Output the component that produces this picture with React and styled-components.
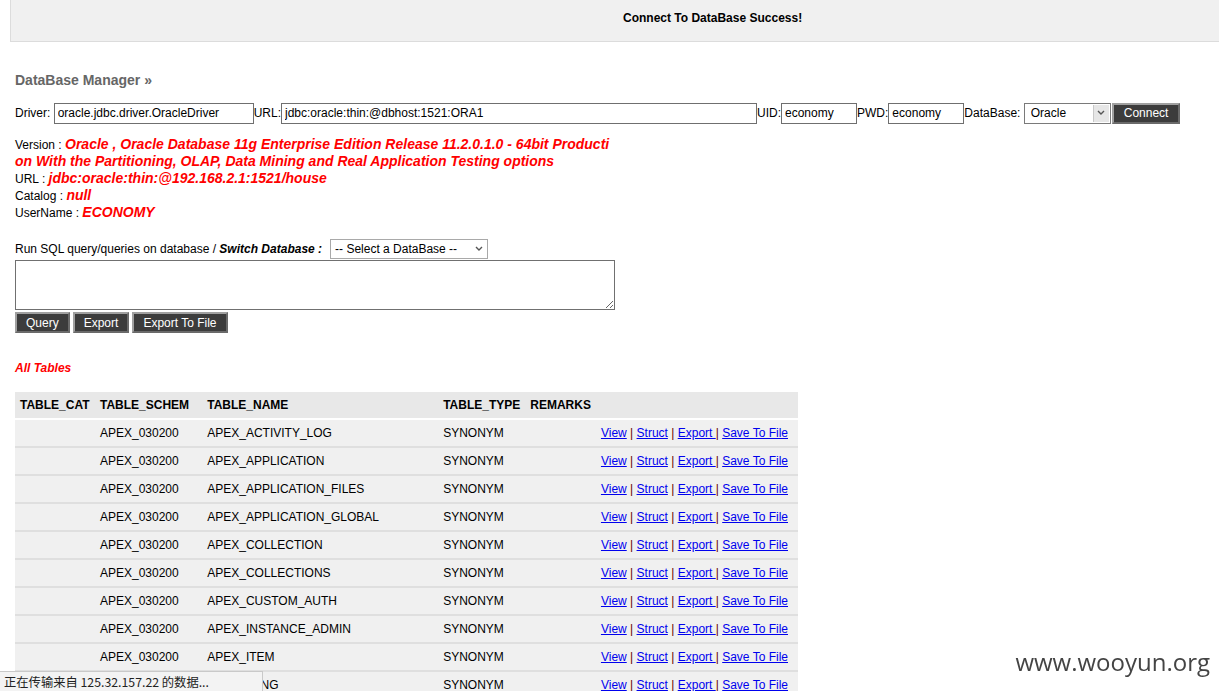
import React from 'react';
import styled, { createGlobalStyle } from 'styled-components';

const GlobalStyle = createGlobalStyle`
  body {
    margin: 0;
    background: #fff;
    font-family: "Liberation Sans", Arial, sans-serif;
    font-size: 12px;
    color: #000;
  }
`;

const TopBar = styled.div`
  margin-left: 10px;
  height: 42px;
  box-sizing: border-box;
  background: #f0f0f0;
  border-left: 1px solid #dcdcdc;
  border-bottom: 1px solid #dcdcdc;
  display: flex;
  align-items: center;
  padding-left: 612px;
  padding-bottom: 6px;
  font-weight: bold;
  font-size: 12px;
`;

const Content = styled.div`
  padding: 0 15px;
`;

const Title = styled.h3`
  margin: 30px 0 14px;
  font-size: 14px;
  font-weight: bold;
  color: #666;
`;

const FormRow = styled.div`
  display: flex;
  align-items: center;
  height: 22px;
`;

const Field = styled.input`
  box-sizing: border-box;
  height: 21px;
  width: ${({ w }) => w}px;
  border: 1px solid #6f6f6f;
  padding: 0 3px;
  font-family: "Liberation Sans", Arial, sans-serif;
  font-size: 12px;
  color: #000;
  outline: none;
`;

const SelectWrap = styled.div`
  position: relative;
  width: ${({ w }) => w}px;
  height: ${({ h }) => h}px;
`;

const Select = styled.select`
  appearance: none;
  box-sizing: border-box;
  width: 100%;
  height: 100%;
  border: 1px solid ${({ light }) => (light ? '#a9a9a9' : '#7a7a7a')};
  background: #fff;
  padding: 0 0 0 ${({ light }) => (light ? 4 : 6)}px;
  font-family: "Liberation Sans", Arial, sans-serif;
  font-size: 12px;
  color: #000;
  outline: none;
`;

const Arrow = styled.div`
  position: absolute;
  top: 2px;
  right: 2px;
  bottom: 2px;
  width: 15px;
  background: ${({ plain }) => (plain ? '#fff' : '#e6e6e6')};
  border-left: ${({ plain }) => (plain ? 'none' : '1px solid #c8c8c8')};
  display: flex;
  align-items: center;
  justify-content: center;
  pointer-events: none;
`;

const DarkButton = styled.button`
  height: 21px;
  padding: 0 ${({ pad }) => pad || 9}px;
  background: #3c3c3c;
  color: #fff;
  border: 2px solid;
  border-color: #a0a0a0 #6a6a6a #6a6a6a #a0a0a0;
  font-family: "Liberation Sans", Arial, sans-serif;
  font-size: 12px;
  margin-left: ${({ ml }) => ml || 0}px;
  cursor: pointer;
`;

const Info = styled.div`
  margin-top: 13px;
  line-height: 17px;
  width: 605px;
`;

const Red = styled.span`
  color: #f00;
  font-weight: bold;
  font-style: italic;
  line-height: 1;
  font-size: ${({ small }) => (small ? 12 : 14)}px;
`;

const QueryLine = styled.div`
  margin-top: 17px;
  display: flex;
  align-items: center;
  gap: 8px;
`;

const Textarea = styled.textarea`
  display: block;
  box-sizing: border-box;
  width: 600px;
  height: 50px;
  margin-top: 1px;
  border: 1px solid #707070;
  resize: both;
`;

const ButtonRow = styled.div`
  display: flex;
  gap: 3px;
  margin-top: 2px;
`;

const AllTables = styled.div`
  margin-top: 28px;
  margin-bottom: 17px;
`;

const Table = styled.table`
  width: 783px;
  border-collapse: collapse;
  font-size: 12px;
`;

const HeadCell = styled.th`
  background: #e8e8e8;
  height: 26px;
  text-align: left;
  padding: 0 5px;
  font-weight: bold;
  border-bottom: 2px solid #fff;
  white-space: nowrap;
`;

const Cell = styled.td`
  background: #f0f0f0;
  height: 26px;
  padding: 0 5px;
  border-bottom: 2px solid #dfdfdf;
  text-align: ${({ right }) => (right ? 'right' : 'left')};
  padding-right: ${({ right }) => (right ? 10 : 5)}px;
  white-space: nowrap;
`;

const Link = styled.a`
  color: #00e;
  text-decoration: underline;
`;

const Sep = styled.span`
  color: #600;
`;

const Status = styled.div`
  position: fixed;
  left: 0;
  bottom: 0;
  width: 263px;
  height: 20px;
  box-sizing: border-box;
  background: #f3f3f3;
  border-top: 1px solid #c9c9c9;
  border-right: 1px solid #c9c9c9;
  padding-left: 4px;
  display: flex;
  align-items: center;
  font-family: "Noto Sans CJK SC", "Liberation Sans", sans-serif;
  font-size: 12.3px;
  color: #222;
`;

const Watermark = styled.div`
  position: fixed;
  right: 9px;
  bottom: 13px;
  font-family: "Open Sans", "DejaVu Sans", sans-serif;
  font-size: 24px;
  color: #444;
`;

const tables = [
  'APEX_ACTIVITY_LOG',
  'APEX_APPLICATION',
  'APEX_APPLICATION_FILES',
  'APEX_APPLICATION_GLOBAL',
  'APEX_COLLECTION',
  'APEX_COLLECTIONS',
  'APEX_CUSTOM_AUTH',
  'APEX_INSTANCE_ADMIN',
  'APEX_ITEM',
  'APEX_LANG',
  'APEX_LDAP',
];

const ArrowIcon = () => (
  <svg width="8" height="6" viewBox="0 0 8 6">
    <path d="M1 1 L4 4 L7 1" fill="none" stroke="#555" strokeWidth="1.4" />
  </svg>
);

const App = () => {
  return (
    <>
      <GlobalStyle />
      <TopBar>Connect To DataBase Success!</TopBar>
      <Content>
        <Title>DataBase Manager »</Title>
        <FormRow>
          Driver:&nbsp;
          <Field w={200} defaultValue="oracle.jdbc.driver.OracleDriver" />
          URL:
          <Field w={476} defaultValue="jdbc:oracle:thin:@dbhost:1521:ORA1" />
          UID:
          <Field w={76} defaultValue="economy" />
          PWD:
          <Field w={76} defaultValue="economy" />
          DataBase:&nbsp;
          <SelectWrap w={87} h={21}>
            <Select defaultValue="Oracle">
              <option>Oracle</option>
              <option>MySQL</option>
              <option>SQLServer</option>
            </Select>
            <Arrow>
              <ArrowIcon />
            </Arrow>
          </SelectWrap>
          <DarkButton ml={1} pad={10}>Connect</DarkButton>
        </FormRow>

        <Info>
          Version : <Red>Oracle , Oracle Database 11g Enterprise Edition Release 11.2.0.1.0 - 64bit Producti on With the Partitioning, OLAP, Data Mining and Real Application Testing options</Red>
          <br />
          URL : <Red>jdbc:oracle:thin:@192.168.2.1:1521/house</Red>
          <br />
          Catalog : <Red>null</Red>
          <br />
          UserName : <Red>ECONOMY</Red>
        </Info>

        <QueryLine>
          <span>
            Run SQL query/queries on database / <b><i>Switch Database :</i></b>
          </span>
          <SelectWrap w={158} h={20}>
            <Select light defaultValue="">
              <option value="">-- Select a DataBase --</option>
            </Select>
            <Arrow plain>
              <ArrowIcon />
            </Arrow>
          </SelectWrap>
        </QueryLine>
        <Textarea />
        <ButtonRow>
          <DarkButton>Query</DarkButton>
          <DarkButton>Export</DarkButton>
          <DarkButton>Export To File</DarkButton>
        </ButtonRow>

        <AllTables>
          <Red small>All Tables</Red>
        </AllTables>

        <Table>
          <thead>
            <tr>
              <HeadCell style={{ width: 70 }}>TABLE_CAT</HeadCell>
              <HeadCell style={{ width: 98 }}>TABLE_SCHEM</HeadCell>
              <HeadCell style={{ width: 231 }}>TABLE_NAME</HeadCell>
              <HeadCell style={{ width: 77 }}>TABLE_TYPE</HeadCell>
              <HeadCell>REMARKS</HeadCell>
              <HeadCell />
            </tr>
          </thead>
          <tbody>
            {tables.map((name) => (
              <tr key={name}>
                <Cell />
                <Cell>APEX_030200</Cell>
                <Cell>{name}</Cell>
                <Cell>SYNONYM</Cell>
                <Cell />
                <Cell right>
                  <Link href="#">View</Link> <Sep>|</Sep> <Link href="#">Struct</Link>{' '}
                  <Sep>|</Sep> <Link href="#">Export </Link>
                  <Sep>|</Sep> <Link href="#">Save To File</Link>
                </Cell>
              </tr>
            ))}
          </tbody>
        </Table>
      </Content>
      <Status>正在传输来自 125.32.157.22 的数据...</Status>
      <Watermark>www.wooyun.org</Watermark>
    </>
  );
};

export default App;
